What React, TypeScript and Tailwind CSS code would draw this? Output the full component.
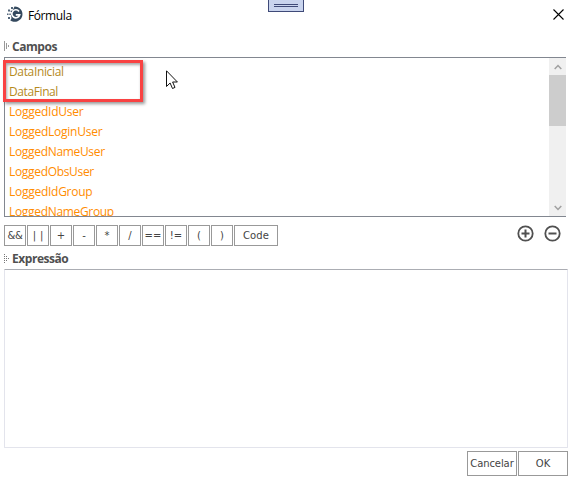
import React from 'react';

const fields = [
  { name: 'DataInicial', style: 'text-[#b58a1c] tracking-[-0.35px]' },
  { name: 'DataFinal', style: 'text-[#b58a1c] tracking-[-0.4px]' },
  { name: 'LoggedIdUser', style: 'text-[#ff8c00] tracking-[-0.25px]' },
  { name: 'LoggedLoginUser', style: 'text-[#ff8c00] tracking-[-0.25px]' },
  { name: 'LoggedNameUser', style: 'text-[#ff8c00] tracking-[-0.32px]' },
  { name: 'LoggedObsUser', style: 'text-[#ff8c00] tracking-[-0.32px]' },
  { name: 'LoggedIdGroup', style: 'text-[#ff8c00] tracking-[-0.27px]' },
  { name: 'LoggedNameGroup', style: 'text-[#ff8c00] tracking-[-0.32px]' },
];

const operators = ['&&', '||', '+', '-', '*', '/', '==', '!=', '(', ')'];

function Logo() {
  return (
    <svg width="17" height="17" viewBox="0 0 17 17" className="shrink-0">
      <path d="M7.5.6A7.6 7.6 0 1 1 3.2 14.2Q5 13 4.2 10.5Q3.4 7.5 5 5Q6.3 3.4 7.5.6Z" fill="#34495e" />
      <path d="M12 5.4A4 4 0 1 0 12.6 8.9H8.8" fill="none" stroke="#fff" strokeWidth="1.7" />
      <g fill="#53667a">
        <rect x="4" y="1" width="2" height="2" />
        <rect x="1" y="3.5" width="2" height="2" />
        <rect x="3.6" y="4.6" width="1.4" height="1.4" />
        <rect x="0" y="7.5" width="1.5" height="1.5" />
        <rect x="2.3" y="7.5" width="1.5" height="1.5" />
        <rect x="1" y="11" width="2" height="2" />
      </g>
    </svg>
  );
}

function Grip({ dotted = false }: { dotted?: boolean }) {
  return (
    <svg width="5" height="10" viewBox="0 0 5 10" className="shrink-0" stroke={dotted ? '#777' : '#999'} fill="none">
      <path d="M.5 0V10" strokeDasharray={dotted ? '1 1' : undefined} />
      <path d="M2.5 2V8" strokeDasharray={dotted ? '1 1' : undefined} />
      <path d="M4.5 4V6" strokeDasharray={dotted ? '1 1' : undefined} />
    </svg>
  );
}

function CircleIcon({ plus = false }: { plus?: boolean }) {
  return (
    <svg width="17" height="17" viewBox="0 0 17 17" fill="none" stroke="#505050">
      <circle cx="8.5" cy="8.5" r="7.2" strokeWidth="1.8" />
      <path d={plus ? 'M4.5 8.5H12.5M8.5 4.5V12.5' : 'M4.5 8.5H12.5'} strokeWidth="2" />
    </svg>
  );
}

const button =
  "flex items-center justify-center border border-[#999] bg-white font-['DejaVu_Sans',sans-serif] text-[#444] whitespace-pre";

export default function App() {
  return (
    <div className="relative flex h-[480px] w-[573px] flex-col overflow-hidden bg-white font-['Open_Sans','Noto_Sans',sans-serif] text-[12px] text-black">
      <header className="flex h-[38px] items-start pl-[7px] pr-[9px]">
        <div className="mt-[6px]"><Logo /></div>
        <h1 className="ml-1 mt-[6px] text-[12px] leading-[20px] tracking-[-0.4px]">Fórmula</h1>
        <svg width="11" height="11" viewBox="0 0 11 11" className="ml-auto mt-[9px]" stroke="#000" strokeWidth="1.1">
          <path d="M.5.5 10.5 10.5M10.5.5.5 10.5" />
        </svg>
      </header>

      <div className="flex h-[19px] items-start pl-1">
        <div className="mt-[3px]"><Grip /></div>
        <h2 className="ml-[3px] text-[12px] font-bold leading-[18px] tracking-[-0.45px] text-[#505050]">Campos</h2>
      </div>

      <section className="ml-1 flex h-[160px] w-[562px] border border-r-0 border-[#828790]">
        <ul className="min-w-0 flex-1 overflow-hidden pl-1 pt-1">
          {fields.map((f) => (
            <li key={f.name} className="h-5 leading-[20px]"><span className={f.style}>{f.name}</span></li>
          ))}
        </ul>
        <div className="flex w-[17px] flex-col bg-[#f0f0f0]">
          <div className="flex h-[17px] items-center justify-center">
            <svg width="8" height="6" viewBox="0 0 8 6" fill="none" stroke="#a0a0a0" strokeWidth="1.5"><path d="M.7 5 4 1.5 7.3 5" /></svg>
          </div>
          <div className="h-[51px] bg-[#cdcdcd]" />
          <div className="mt-auto flex h-[17px] items-center justify-center">
            <svg width="8" height="6" viewBox="0 0 8 6" fill="none" stroke="#a0a0a0" strokeWidth="1.5"><path d="M.7 1 4 4.5 7.3 1" /></svg>
          </div>
        </div>
      </section>

      <div className="mt-2 flex h-[21px] items-start pl-1 pr-[12px] text-[10px]">
        <div className="flex h-[21px] gap-px">
          {operators.map((op) => (
            <button key={op} className={`${button} w-[22px] ${op === '||' ? 'tracking-[4px] pl-[4px]' : op === '&&' ? 'tracking-[-0.4px]' : ''}`}>{op}</button>
          ))}
          <button className={`${button} w-11 tracking-[0.1px]`}>Code</button>
        </div>
        <div className="ml-auto flex gap-[10px]">
          <CircleIcon plus />
          <CircleIcon />
        </div>
      </div>

      <div className="flex h-[23px] items-start pl-1 pt-1">
        <div className="mt-1"><Grip dotted /></div>
        <h2 className="ml-[3px] text-[12px] font-bold leading-[18px] tracking-[-0.45px] text-[#505050]">Expressão</h2>
      </div>
      <section className="ml-1 h-[179px] w-[564px] rounded-[1px] border border-[#e3e4ec] border-t-[#abadb3]" />

      <footer className="mt-[3px] flex h-[25px] justify-end gap-px pr-[5px] text-[10px]">
        <button className={`${button} w-[50px] tracking-[-0.1px]`}>Cancelar</button>
        <button className={`${button} w-[50px]`}>OK</button>
      </footer>

      <div className="absolute left-[268px] top-0 flex h-3 w-9 flex-col items-center border border-t-0 border-[#3f4a78] bg-[#c9d4ee] pt-1">
        <div className="h-[3px] w-6 border-y border-[#3f4a78]" />
      </div>
      <div className="absolute left-[3px] top-[60px] h-[42px] w-[140px] border-[3px] border-[#f94242] shadow-[2px_2px_3px_rgba(0,0,0,0.4),inset_1px_2px_3px_rgba(0,0,0,0.35)]" />
      <svg className="absolute left-[166px] top-[70px]" width="12" height="20" viewBox="0 0 12 20" fill="#fff" stroke="#111" strokeWidth="1">
        <path d="M.5.8V16.5L4.1 13 6.5 18.5 9 17.4 6.6 12H11.4Z" />
      </svg>
    </div>
  );
}
